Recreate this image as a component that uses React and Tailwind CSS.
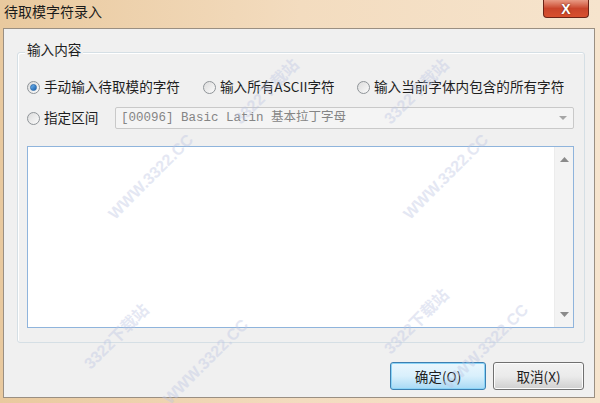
import React from "react";

const cjk = { fontFamily: '"Microsoft YaHei", "Noto Sans CJK SC", sans-serif' };
const mono = { fontFamily: '"Liberation Mono", "Noto Sans CJK SC", monospace' };

function Radio({ checked, label, className = "" }) {
  return (
    <div className={`flex items-center ${className}`}>
      <div className="w-[13px] h-[13px] rounded-full border border-[#8f9498] bg-gradient-to-br from-[#dcdcdc] to-[#fbfbfb] flex items-center justify-center">
        {checked && (
          <div className="w-[7px] h-[7px] rounded-full bg-gradient-to-br from-[#72b8f0] to-[#155fad] border border-[#2f6fb0]" />
        )}
      </div>
      <span className="ml-[4px] text-[13.6px] text-[#1e1e1e] leading-none whitespace-nowrap">{label}</span>
    </div>
  );
}

// faint diagonal site watermark lying over the dialog
function Watermark({ text, x, y }) {
  return (
    <div
      className="absolute text-[16px] font-bold text-[#bcc5e3] opacity-40 whitespace-nowrap pointer-events-none -rotate-45"
      style={{ left: x, top: y, fontFamily: '"Liberation Sans", "Noto Sans CJK SC", sans-serif' }}
    >
      {text}
    </div>
  );
}

export default function App() {
  return (
    <div
      className="relative w-[600px] h-[403px] overflow-hidden bg-gradient-to-r from-[#e9c99e] via-[#f3dcbf] to-[#f6e4cd] flex flex-col"
      style={cjk}
    >
      {/* title bar */}
      <div className="h-[28px] flex items-start justify-between">
        <div className="pl-[4px] pt-[4px] text-[14px] text-[#1b1b1b] leading-none">待取模字符录入</div>
        <div className="mr-[11px] w-[46px] h-[18px] rounded-b-[4px] border border-t-0 border-[#6b2417] bg-gradient-to-b from-[#e89a84] via-[#c9452b] to-[#d8502f] flex items-center justify-center">
          <span className="text-white font-bold text-[14px] leading-none" style={{ fontFamily: '"Liberation Sans", sans-serif', textShadow: "0 0 2px #5a1a10" }}>
            X
          </span>
        </div>
      </div>

      {/* client area */}
      <div className="ml-[3px] mr-[5px] mb-[5px] flex-1 border border-[#9a8f82] bg-[#f0f0f0] flex flex-col">
        {/* group box */}
        <div className="relative mt-[23px] ml-[13px] w-[568px] h-[291px] rounded-[3px] border border-[#d5dfe5] shadow-[inset_1px_1px_0_#ffffff] pl-[9px] pr-[10px]">
          <div className="absolute left-[7px] -top-[10px] px-[2px] bg-[#f0f0f0] text-[13.6px] text-[#1e1e1e] leading-none">输入内容</div>

          <div className="mt-[26px] flex items-center h-[16px]">
            <Radio checked label="手动输入待取模的字符" className="w-[176px]" />
            <Radio label="输入所有ASCII字符" className="w-[154px]" />
            <Radio label="输入当前字体内包含的所有字符" />
          </div>

          <div className="mt-[12px] flex items-center h-[22px]">
            <Radio label="指定区间" className="w-[88px]" />
            <div className="flex-1 h-[22px] border border-[#c9c9c9] rounded-[2px] bg-[#f4f4f4] flex items-center justify-between pl-[5px] pr-[6px]">
              <span className="text-[12.5px] text-[#858585] whitespace-nowrap" style={mono}>
                [00096] Basic Latin 基本拉丁字母
              </span>
              <svg width="8" height="5" viewBox="0 0 8 5">
                <path d="M0 0 L8 0 L4 4 Z" fill="#a6a6a6" />
              </svg>
            </div>
          </div>

          <div className="mt-[17px] h-[182px] border border-[#8fb4dc] bg-white flex justify-end">
            <div className="w-[19px] h-full bg-[#f3f3f3] border-l border-[#ececec] flex flex-col items-center justify-between py-[10px]">
              <svg width="9" height="5" viewBox="0 0 9 5">
                <path d="M0 5 L9 5 L4.5 0 Z" fill="#8a8a8a" />
              </svg>
              <svg width="9" height="5" viewBox="0 0 9 5">
                <path d="M0 0 L9 0 L4.5 5 Z" fill="#8a8a8a" />
              </svg>
            </div>
          </div>
        </div>

        {/* buttons */}
        <div className="mt-[19px] mr-[10px] flex justify-end gap-[7px]">
          <button className="w-[96px] h-[28px] rounded-[3px] border border-[#3c7fb1] bg-gradient-to-b from-[#eaf6fd] via-[#d9f0fc] to-[#a7d9f5] shadow-[inset_0_0_0_1px_#8bd4f7] text-[13.6px] text-[#1e1e1e]">
            确定(O)
          </button>
          <button className="w-[91px] h-[28px] rounded-[3px] border border-[#707070] bg-gradient-to-b from-[#f2f2f2] via-[#ebebeb] to-[#cfcfcf] shadow-[inset_0_0_0_1px_#fcfcfc] text-[13.6px] text-[#1e1e1e]">
            取消(X)
          </button>
        </div>
      </div>

      {/* watermarks */}
      <Watermark text="3322下载站" x={225} y={80} />
      <Watermark text="WWW.3322.CC" x={95} y={165} />
      <Watermark text="3322下载站" x={375} y={80} />
      <Watermark text="WWW.3322.CC" x={390} y={165} />
      <Watermark text="3322下载站" x={75} y={325} />
      <Watermark text="WWW.3322.CC" x={150} y={350} />
      <Watermark text="3322下载站" x={375} y={310} />
      <Watermark text="WWW.3322.CC" x={430} y={335} />
    </div>
  );
}
